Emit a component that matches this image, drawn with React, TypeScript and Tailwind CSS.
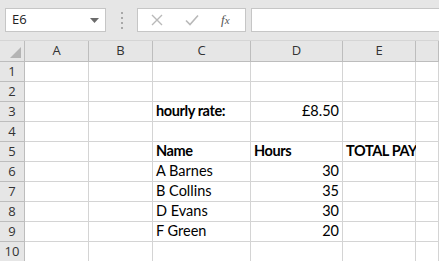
import React from "react";

const cols = ["A", "B", "C", "D", "E", ""];
const widths = "25px 64px 64px 98px 92px 73px 1fr";

type Cell = { t: string; bold?: boolean; right?: boolean };
const data: Record<number, Record<number, Cell>> = {
  3: { 2: { t: "hourly rate:", bold: true }, 3: { t: "£8.50", right: true } },
  5: { 2: { t: "Name", bold: true }, 3: { t: "Hours", bold: true }, 4: { t: "TOTAL PAY", bold: true } },
  6: { 2: { t: "A Barnes" }, 3: { t: "30", right: true } },
  7: { 2: { t: "B Collins" }, 3: { t: "35", right: true } },
  8: { 2: { t: "D Evans" }, 3: { t: "30", right: true } },
  9: { 2: { t: "F Green" }, 3: { t: "20", right: true } },
};

const cellFont = { fontFamily: "Lato, 'Open Sans', sans-serif" };
const uiFont = { fontFamily: "'Open Sans', 'Noto Sans', sans-serif" };

export default function App() {
  const rows = [1, 2, 3, 4, 5, 6, 7, 8, 9, 10];
  return (
    <div className="w-[439px] h-[261px] overflow-hidden bg-[#e6e6e6] relative">
      {/* toolbar */}
      <div className="h-[41px] flex items-start pt-[8px] pl-[5px] border-b border-[#d5d5d5]">
        <div
          className="w-[101px] h-[24px] bg-white border border-[#c6c6c6] flex items-center justify-between pl-[6px] pr-[6px] text-[13px] text-[#222]"
          style={uiFont}
        >
          <span>E6</span>
          <svg width="9" height="5" viewBox="0 0 9 5"><path d="M0 0h9L4.5 5z" fill="#6b6b6b" /></svg>
        </div>
        <div className="w-[31px] h-[24px] flex flex-col items-center justify-center gap-[3px]">
          <span className="w-[2px] h-[2px] bg-[#a8a8a8]" />
          <span className="w-[2px] h-[2px] bg-[#a8a8a8]" />
          <span className="w-[2px] h-[2px] bg-[#a8a8a8]" />
          <span className="w-[2px] h-[2px] bg-[#a8a8a8]" />
        </div>
        <div className="w-[109px] h-[24px] bg-white border border-[#c6c6c6] flex items-center">
          <svg className="ml-[13px]" width="12" height="12" viewBox="0 0 12 12">
            <path d="M1 1L11 11M11 1L1 11" stroke="#b9b9b9" strokeWidth="1.4" />
          </svg>
          <svg className="ml-[22px]" width="14" height="12" viewBox="0 0 14 12">
            <path d="M1 6.5L5 10.5L13 1.5" stroke="#b9b9b9" strokeWidth="1.6" fill="none" />
          </svg>
          <span
            className="ml-[22px] text-[13px] italic text-[#555]"
            style={{ fontFamily: "'Liberation Serif', serif" }}
          >
            f<span className="text-[11px]">x</span>
          </span>
        </div>
        <div className="ml-[5px] flex-1 h-[24px] bg-white border border-[#c6c6c6] border-r-0" />
      </div>
      {/* grid */}
      <div className="grid" style={{ gridTemplateColumns: widths }}>
        {/* header */}
        <div className="h-[21px] bg-[#e6e6e6] border-r border-b border-[#bdbdbd] relative">
          <svg className="absolute right-[3px] bottom-[3px]" width="11" height="11" viewBox="0 0 11 11">
            <path d="M11 0V11H0z" fill="#b4b4b4" />
          </svg>
        </div>
        {cols.map((c, i) => (
          <div
            key={i}
            className="h-[21px] bg-[#e6e6e6] border-r border-b border-[#bdbdbd] flex items-center justify-center text-[13px] text-[#333]"
            style={uiFont}
          >
            {c}
          </div>
        ))}
        {rows.map((r) => (
          <React.Fragment key={r}>
            <div
              className="h-[20px] bg-[#e6e6e6] border-r border-b border-[#bdbdbd] flex items-center justify-center text-[13px] text-[#333]"
              style={uiFont}
            >
              {r}
            </div>
            {cols.map((_, ci) => {
              const cell = data[r]?.[ci];
              return (
                <div
                  key={ci}
                  className={
                    "h-[20px] bg-white border-r border-b border-[#d4d4d4] flex items-end pb-[1px] text-[14.5px] leading-[18px] text-black whitespace-nowrap " +
                    (cell?.right ? "justify-end pr-[3px]" : "pl-[3px]") +
                    (cell?.bold ? " font-bold tracking-[-0.4px]" : "")
                  }
                  style={cellFont}
                >
                  {cell?.t ?? ""}
                </div>
              );
            })}
          </React.Fragment>
        ))}
      </div>
    </div>
  );
}
